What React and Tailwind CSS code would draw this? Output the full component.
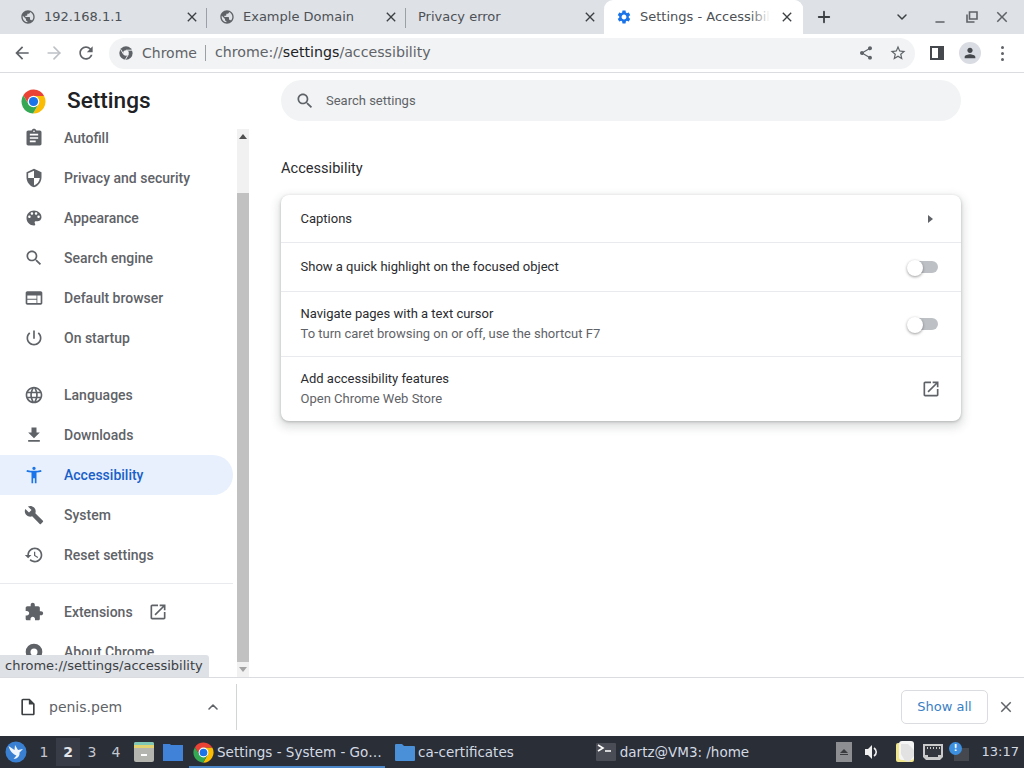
import { ChevronDown, ChevronUp, Plus, Minus, ArrowRight } from "lucide-react";

const paths = {
  back: "M20 11H7.83l5.59-5.59L12 4l-8 8 8 8 1.41-1.41L7.83 13H20v-2z",
  reload: "M17.65 6.35C16.2 4.9 14.21 4 12 4c-4.42 0-7.99 3.58-7.99 8s3.57 8 7.99 8c3.73 0 6.84-2.55 7.73-6h-2.08c-.82 2.33-3.04 4-5.65 4-3.31 0-6-2.69-6-6s2.69-6 6-6c1.66 0 3.14.69 4.22 1.78L13 11h7V4l-2.35 2.35z",
  globe: "M12 2C6.48 2 2 6.48 2 12s4.48 10 10 10 10-4.48 10-10S17.52 2 12 2zm-1 17.93c-3.95-.49-7-3.85-7-7.93 0-.62.08-1.21.21-1.79L9 15v1c0 1.1.9 2 2 2v1.93zm6.9-2.54c-.26-.81-1-1.39-1.9-1.39h-1v-3c0-.55-.45-1-1-1H8v-2h2c.55 0 1-.45 1-1V7h2c1.1 0 2-.9 2-2v-.41c2.93 1.19 5 4.06 5 7.41 0 2.08-.8 3.97-2.1 5.39z",
  close: "M19 6.41L17.59 5 12 10.59 6.41 5 5 6.41 10.59 12 5 17.59 6.41 19 12 13.41 17.59 19 19 17.59 13.41 12z",
  gear: "M19.14 12.94c.04-.3.06-.61.06-.94 0-.32-.02-.64-.07-.94l2.03-1.58c.18-.14.23-.41.12-.61l-1.92-3.32c-.12-.22-.37-.29-.59-.22l-2.39.96c-.5-.38-1.03-.7-1.62-.94l-.36-2.54c-.04-.24-.24-.41-.48-.41h-3.84c-.24 0-.43.17-.47.41l-.36 2.54c-.59.24-1.13.57-1.62.94l-2.39-.96c-.22-.08-.47 0-.59.22L2.74 8.87c-.12.21-.08.47.12.61l2.03 1.58c-.05.3-.09.63-.09.94s.02.64.07.94l-2.03 1.58c-.18.14-.23.41-.12.61l1.92 3.32c.12.22.37.29.59.22l2.39-.96c.5.38 1.03.7 1.62.94l.36 2.54c.05.24.24.41.48.41h3.84c.24 0 .44-.17.47-.41l.36-2.54c.59-.24 1.13-.56 1.62-.94l2.39.96c.22.08.47 0 .59-.22l1.92-3.32c.12-.22.07-.47-.12-.61l-2.01-1.58zM12 15.6c-1.98 0-3.6-1.62-3.6-3.6s1.62-3.6 3.6-3.6 3.6 1.62 3.6 3.6-1.62 3.6-3.6 3.6z",
  search: "M15.5 14h-.79l-.28-.27C15.41 12.59 16 11.11 16 9.5 16 5.91 13.09 3 9.5 3S3 5.91 3 9.5 5.91 16 9.5 16c1.61 0 3.09-.59 4.23-1.57l.27.28v.79l5 4.99L20.49 19l-4.99-5zm-6 0C7.01 14 5 11.99 5 9.5S7.01 5 9.5 5 14 7.01 14 9.5 11.99 14 9.5 14z",
  assignment: "M19 3h-4.18C14.4 1.84 13.3 1 12 1c-1.3 0-2.4.84-2.82 2H5c-1.1 0-2 .9-2 2v14c0 1.1.9 2 2 2h14c1.1 0 2-.9 2-2V5c0-1.1-.9-2-2-2zm-7 0c.55 0 1 .45 1 1s-.45 1-1 1-1-.45-1-1 .45-1 1-1zm2 14H7v-2h7v2zm3-4H7v-2h10v2zm0-4H7V7h10v2z",
  shield: "M12 1L3 5v6c0 5.55 3.84 10.74 9 12 5.16-1.26 9-6.45 9-12V5l-9-4zm0 10.99h7c-.53 4.12-3.28 7.79-7 8.94V12H5V6.3l7-3.11v8.8z",
  palette: "M12 3c-4.97 0-9 4.03-9 9s4.03 9 9 9c.83 0 1.5-.67 1.5-1.5 0-.39-.15-.74-.39-1.01-.23-.26-.38-.61-.38-.99 0-.83.67-1.5 1.5-1.5H16c2.76 0 5-2.24 5-5 0-4.42-4.03-8-9-8zm-5.5 9c-.83 0-1.5-.67-1.5-1.5S5.67 9 6.5 9 8 9.67 8 10.5 7.33 12 6.5 12zm3-4C8.67 8 8 7.33 8 6.5S8.67 5 9.5 5s1.5.67 1.5 1.5S10.33 8 9.5 8zm5 0c-.83 0-1.5-.67-1.5-1.5S13.67 5 14.5 5s1.5.67 1.5 1.5S15.33 8 14.5 8zm3 4c-.83 0-1.5-.67-1.5-1.5S16.67 9 17.5 9s1.5.67 1.5 1.5-.67 1.5-1.5 1.5z",
  web: "M20 4H4c-1.1 0-1.99.9-1.99 2L2 18c0 1.1.9 2 2 2h16c1.1 0 2-.9 2-2V6c0-1.1-.9-2-2-2zm-5 14H4v-4h11v4zm0-5H4V9h11v4zm5 5h-4V9h4v9z",
  power: "M13 3h-2v10h2V3zm4.83 2.17l-1.42 1.42C17.99 7.86 19 9.81 19 12c0 3.87-3.13 7-7 7s-7-3.13-7-7c0-2.19 1.01-4.14 2.58-5.42L6.17 5.17C4.23 6.82 3 9.26 3 12c0 4.97 4.03 9 9 9s9-4.03 9-9c0-2.74-1.23-5.18-3.17-6.83z",
  language: "M11.99 2C6.47 2 2 6.48 2 12s4.47 10 9.99 10C17.52 22 22 17.52 22 12S17.52 2 11.99 2zm6.93 6h-2.95c-.32-1.25-.78-2.45-1.38-3.56 1.84.63 3.37 1.91 4.33 3.56zM12 4.04c.83 1.2 1.48 2.53 1.91 3.96h-3.82c.43-1.43 1.08-2.76 1.91-3.96zM4.26 14C4.1 13.36 4 12.69 4 12s.1-1.36.26-2h3.38c-.08.66-.14 1.32-.14 2 0 .68.06 1.34.14 2H4.26zm.82 2h2.95c.32 1.25.78 2.45 1.38 3.56-1.84-.63-3.37-1.9-4.33-3.56zm2.95-8H5.08c.96-1.66 2.49-2.93 4.33-3.56C8.81 5.55 8.35 6.75 8.03 8zM12 19.96c-.83-1.2-1.48-2.53-1.91-3.96h3.82c-.43 1.43-1.08 2.76-1.91 3.96zM14.34 14H9.66c-.09-.66-.16-1.32-.16-2 0-.68.07-1.35.16-2h4.68c.09.65.16 1.32.16 2 0 .68-.07 1.34-.16 2zm.25 5.56c.6-1.11 1.06-2.31 1.38-3.56h2.95c-.96 1.65-2.49 2.93-4.33 3.56zM16.36 14c.08-.66.14-1.32.14-2 0-.68-.06-1.34-.14-2h3.38c.16.64.26 1.31.26 2s-.1 1.36-.26 2h-3.38z",
  download: "M19 9h-4V3H9v6H5l7 7 7-7zM5 18v2h14v-2H5z",
  accessibility: "M20.5 6c-2.61.7-5.67 1-8.5 1s-5.89-.3-8.5-1L3 8c1.86.5 4 .83 6 1v13h2v-6h2v6h2V9c2-.17 4.14-.5 6-1l-.5-2zM12 6c1.1 0 2-.9 2-2s-.9-2-2-2-2 .9-2 2 .9 2 2 2z",
  wrench: "M22.7 19l-9.1-9.1c.9-2.3.4-5-1.5-6.9-2-2-5-2.4-7.4-1.3L9 6 6 9 1.6 4.7C.4 7.1.9 10.1 2.9 12.1c1.9 1.9 4.6 2.4 6.9 1.5l9.1 9.1c.4.4 1 .4 1.4 0l2.3-2.3c.5-.4.5-1.1.1-1.4z",
  restore: "M13 3c-4.97 0-9 4.03-9 9H1l3.89 3.89.07.14L9 12H6c0-3.87 3.13-7 7-7s7 3.13 7 7-3.13 7-7 7c-1.93 0-3.68-.79-4.94-2.06l-1.42 1.42C8.27 19.99 10.51 21 13 21c4.97 0 9-4.03 9-9s-4.03-9-9-9zm-1 5v5l4.28 2.54.72-1.21-3.5-2.08V8H12z",
  extension: "M20.5 11H19V7c0-1.1-.9-2-2-2h-4V3.5C13 2.12 11.88 1 10.5 1S8 2.12 8 3.5V5H4c-1.1 0-1.99.9-1.99 2v3.8H3.5c1.49 0 2.7 1.21 2.7 2.7s-1.21 2.7-2.7 2.7H2V20c0 1.1.9 2 2 2h3.8v-1.5c0-1.49 1.21-2.7 2.7-2.7 1.49 0 2.7 1.21 2.7 2.7V22H17c1.1 0 2-.9 2-2v-4h1.5c1.38 0 2.5-1.12 2.5-2.5S21.88 11 20.5 11z",
  open: "M19 19H5V5h7V3H5c-1.11 0-2 .9-2 2v14c0 1.1.89 2 2 2h14c1.1 0 2-.9 2-2v-7h-2v7zM14 3v2h3.59l-9.83 9.83 1.41 1.41L19 6.41V10h2V3h-7z",
  star: "M22 9.24l-7.19-.62L12 2 9.19 8.63 2 9.24l5.46 4.73L5.82 21 12 17.27 18.18 21l-1.63-7.03L22 9.24zM12 15.4l-3.76 2.27 1-4.28-3.32-2.88 4.38-.38L12 6.1l1.71 4.04 4.38.38-3.32 2.88 1 4.28L12 15.4z",
  share: "M18 16.08c-.76 0-1.44.3-1.96.77L8.91 12.7c.05-.23.09-.46.09-.7s-.04-.47-.09-.7l7.05-4.11c.54.5 1.25.81 2.04.81 1.66 0 3-1.34 3-3s-1.34-3-3-3-3 1.34-3 3c0 .24.04.47.09.7L8.04 9.81C7.5 9.31 6.79 9 6 9c-1.66 0-3 1.34-3 3s1.34 3 3 3c.79 0 1.5-.31 2.04-.81l7.12 4.16c-.05.21-.08.43-.08.65 0 1.61 1.31 2.92 2.92 2.92 1.61 0 2.92-1.31 2.92-2.92s-1.31-2.92-2.92-2.92z",
  person: "M12 12c2.21 0 4-1.79 4-4s-1.79-4-4-4-4 1.79-4 4 1.79 4 4 4zm0 2c-2.67 0-8 1.34-8 4v2h16v-2c0-2.66-5.33-4-8-4z",
  file: "M14 2H6c-1.1 0-1.99.9-1.99 2L4 20c0 1.1.89 2 1.99 2H18c1.1 0 2-.9 2-2V8l-6-6zm4 18H6V4h7v5h5v11z",
};

function Icon({ d, size = 24, className = "" }) {
  return (
    <svg width={size} height={size} viewBox="0 0 24 24" fill="currentColor" className={`shrink-0 ${className}`}>
      <path d={d} />
    </svg>
  );
}

function ChromeLogo({ size = 24 }) {
  return (
    <svg width={size} height={size} viewBox="0 0 24 24" className="shrink-0">
      <path d="M2.2 5.9A11.6 11.6 0 0 1 22.2 6.6L12 6.6 7.32 14.7z" fill="#ea4335" />
      <path d="M22.2 6.6A11.6 11.6 0 0 1 11.6 23.6L16.68 14.7 12 6.6z" fill="#fbbc04" />
      <path d="M11.6 23.6A11.6 11.6 0 0 1 2.2 5.9L7.32 14.7 16.68 14.7z" fill="#34a853" />
      <circle cx="12" cy="12" r="5.6" fill="#fff" />
      <circle cx="12" cy="12" r="4.4" fill="#1a73e8" />
    </svg>
  );
}

const tabs = [
  { title: "192.168.1.1", icon: true },
  { title: "Example Domain", icon: true },
  { title: "Privacy error", icon: false },
];

const group1 = [
  ["Autofill", paths.assignment],
  ["Privacy and security", paths.shield],
  ["Appearance", paths.palette],
  ["Search engine", paths.search],
  ["Default browser", paths.web],
  ["On startup", paths.power],
];

const group2 = [
  ["Languages", paths.language],
  ["Downloads", paths.download],
  ["Accessibility", paths.accessibility, true],
  ["System", paths.wrench],
  ["Reset settings", paths.restore],
];

function Tab({ title, icon }) {
  return (
    <div className="w-[199px] h-full flex items-center relative pl-3">
      {icon && <Icon d={paths.globe} size={16} className="text-[#5f6368] mr-2" />}
      <span className="text-[13px] text-[#4d5156] whitespace-nowrap">{title}</span>
      <Icon d={paths.close} size={16} className="text-[#3c4043] absolute right-[7px] top-[9px]" />
      <div className="absolute right-0 top-2 w-px h-5 bg-[#9aa0a6]" />
    </div>
  );
}

function TabStrip() {
  return (
    <div className="h-[34px] bg-[#dee1e6] flex items-center pl-2 shrink-0">
      {tabs.map((t) => <Tab key={t.title} {...t} />)}
      <div className="w-[199px] h-full bg-white rounded-t-[9px] flex items-center pl-[12px] relative -ml-[1px]">
        <Icon d={paths.gear} size={16} className="text-[#1a73e8] mr-2" />
        <span className="text-[13px] text-[#4d5156] whitespace-nowrap">Settings - Accessibility</span>
        <div className="absolute left-[146px] top-0 bottom-0 w-[53px] rounded-tr-[9px] bg-[linear-gradient(90deg,rgba(255,255,255,0)_0,#fff_20px)]" />
        <Icon d={paths.close} size={16} className="text-[#3c4043] absolute right-[8px] top-[9px]" />
      </div>
      <Plus size={18} strokeWidth={2.4} className="text-[#3c4043] ml-[12px]" />
      <ChevronDown size={16} strokeWidth={2.2} className="text-[#3c4043] ml-[61px]" />
      <Minus size={14} strokeWidth={2.2} className="text-[#5f6368] ml-[23px] mt-[9px]" />
      <svg width="12" height="12" viewBox="0 0 12 12" className="ml-[19px] text-[#5f6368] shrink-0" fill="none" stroke="currentColor" strokeWidth="1.6">
        <path d="M3.5 1h7.5v7H3.5zM1 3.5V11h7.5" />
      </svg>
      <Icon d={paths.close} size={18} className="text-[#5f6368] ml-[15px]" />
    </div>
  );
}

function Toolbar() {
  return (
    <div className="h-[39px] bg-white border-b border-[#dadce0] flex items-center shrink-0">
      <Icon d={paths.back} size={20} className="text-[#5f6368] ml-[12px]" />
      <ArrowRight size={20} strokeWidth={2} className="text-[#bdc1c6] ml-[12px]" />
      <Icon d={paths.reload} size={20} className="text-[#5f6368] ml-[12px]" />
      <div className="ml-[13px] w-[806px] h-[31px] bg-[#f1f3f4] rounded-full flex items-center pl-[9px] pr-[8px]">
        <svg width="16" height="16" viewBox="0 0 24 24" className="shrink-0 text-[#5f6368]">
          <circle cx="12" cy="12" r="10" fill="currentColor" />
          <circle cx="12" cy="12" r="4.2" fill="#f1f3f4" />
          <path d="M12 7.8h9M8.4 14.1 4 6.5M15.6 14.1 11 22" stroke="#f1f3f4" strokeWidth="1.4" />
        </svg>
        <span className="text-[14px] text-[#5f6368] ml-[8px]">Chrome</span>
        <div className="w-px h-[16px] bg-[#9aa0a6] mx-[8.5px]" />
        <span className="text-[14.2px] text-[#5f6368] whitespace-nowrap">chrome://<span className="text-[#202124]">settings</span>/accessibility</span>
        <Icon d={paths.share} size={16} className="text-[#5f6368] ml-auto" />
        <Icon d={paths.star} size={18} className="text-[#5f6368] ml-[15px]" />
      </div>
      <svg width="14" height="14" viewBox="0 0 14 14" className="ml-[15px] shrink-0">
        <path d="M0 0h14v14H0zM2 2v10h6V2z" fill="#45494e" fillRule="evenodd" />
      </svg>
      <div className="ml-[15px] w-[22px] h-[22px] rounded-full bg-[#dadce3] flex items-center justify-center shrink-0">
        <Icon d={paths.person} size={16} className="text-[#45494e]" />
      </div>
      <div className="ml-[20px] flex flex-col gap-[3px]">
        <div className="w-[3px] h-[3px] rounded-full bg-[#5f6368]" />
        <div className="w-[3px] h-[3px] rounded-full bg-[#5f6368]" />
        <div className="w-[3px] h-[3px] rounded-full bg-[#5f6368]" />
      </div>
    </div>
  );
}

function NavItem({ label, d, active }) {
  return (
    <div className={`h-10 flex items-center pl-[24px] rounded-r-full text-[14px] font-medium ${active ? "bg-[#e8f0fe] text-[#1a5fc8]" : "text-[#5f6368]"}`}>
      <Icon d={d} size={20} className={active ? "text-[#1a73e8]" : "text-[#5f6368]"} />
      <span className="ml-[20px] font-['Roboto',sans-serif] whitespace-nowrap">{label}</span>
    </div>
  );
}

function Sidebar() {
  return (
    <div className="w-[233px] shrink-0 h-full flex flex-col">
      <div className="h-[52px] flex items-center pl-[21px] pt-[4px] shrink-0">
        <ChromeLogo size={25} />
        <span className="ml-[21px] text-[22.6px] font-medium text-[#202124] font-['Roboto',sans-serif] leading-none">Settings</span>
      </div>
      <div className="flex-1 overflow-hidden">
        <div className="-mt-[7px]">
          {group1.map(([l, d]) => <NavItem key={l} label={l} d={d} />)}
          <div className="h-[17px]" />
          {group2.map(([l, d, a]) => <NavItem key={l} label={l} d={d} active={a} />)}
          <div className="border-t border-[#e8eaed] w-[237px] mt-[8px] mb-[8px]" />
          <div className="h-10 flex items-center pl-[24px] text-[14px] font-medium text-[#5f6368] font-['Roboto',sans-serif]">
            <Icon d={paths.extension} size={20} />
            <span className="ml-[20px]">Extensions</span>
            <Icon d={paths.open} size={20} className="ml-[15px]" />
          </div>
          <div className="h-10 flex items-center pl-[24px] text-[14px] font-medium text-[#5f6368] font-['Roboto',sans-serif]">
            <ChromeLogoMono />
            <span className="ml-[20px]">About Chrome</span>
          </div>
        </div>
      </div>
    </div>
  );
}

function ChromeLogoMono() {
  return (
    <svg width="20" height="20" viewBox="0 0 24 24" className="shrink-0 text-[#5f6368]">
      <circle cx="12" cy="12" r="10" fill="currentColor" />
      <circle cx="12" cy="12" r="4.2" fill="#fff" />
    </svg>
  );
}

function Scrollbar() {
  return (
    <div className="w-[12px] shrink-0 flex flex-col h-full pt-[56px] ml-[4px] bg-white">
      <div className="flex-1 flex flex-col bg-[#f1f1f1]">
        <div className="h-[64px] flex justify-center pt-[5px]">
          <div className="w-0 h-0 border-x-[4px] border-x-transparent border-b-[5px] border-b-[#505050]" />
        </div>
        <div className="flex-1 bg-[#c1c1c1]" />
        <div className="h-[15px] flex justify-center pt-[5px]">
          <div className="w-0 h-0 border-x-[4px] border-x-transparent border-t-[5px] border-t-[#a3a3a3]" />
        </div>
      </div>
    </div>
  );
}

function Toggle() {
  return (
    <div className="relative w-[31px] h-[12px] ml-auto mr-[7px]">
      <div className="absolute right-0 top-0 w-[27px] h-[12px] rounded-full bg-[#bdc1c6]" />
      <div className="absolute left-0 -top-[1px] w-[16px] h-[16px] rounded-full bg-white shadow-[0_1px_3px_rgba(0,0,0,0.4)]" />
    </div>
  );
}

function Row({ title, sub, height, children, last }) {
  return (
    <div className={`flex items-center pl-[19.5px] pr-[16px] ${height} ${last ? "" : "border-b border-[#e8eaed]"}`}>
      <div className="flex flex-col font-['Roboto',sans-serif] text-[13px] leading-[20px]">
        <span className="text-[#2b2c30]">{title}</span>
        {sub && <span className="text-[#5f6368]">{sub}</span>}
      </div>
      {children}
    </div>
  );
}

function Main() {
  return (
    <div className="flex-1 h-full pl-[32px] pt-[7px] bg-white">
      <div className="w-[680px] h-[41px] bg-[#f1f3f4] rounded-full flex items-center pl-[14px]">
        <Icon d={paths.search} size={20} className="text-[#5f6368]" />
        <span className="ml-[11px] text-[13px] text-[#5f6368] font-['Roboto',sans-serif]">Search settings</span>
      </div>
      <div className="mt-[37px] text-[14.6px] leading-[20px] text-[#2b2c30] font-['Roboto',sans-serif]">Accessibility</div>
      <div className="mt-[17px] w-[680px] bg-white rounded-[8px] shadow-[0_1px_3px_rgba(60,64,67,0.3),0_4px_8px_3px_rgba(60,64,67,0.15)]">
        <Row title="Captions" height="h-[48px]">
          <div className="ml-auto mr-[12px] w-0 h-0 border-y-[4px] border-y-transparent border-l-[5px] border-l-[#5f6368]" />
        </Row>
        <Row title="Show a quick highlight on the focused object" height="h-[49px]"><Toggle /></Row>
        <Row title="Navigate pages with a text cursor" sub="To turn caret browsing on or off, use the shortcut F7" height="h-[65px]"><Toggle /></Row>
        <Row title="Add accessibility features" sub="Open Chrome Web Store" height="h-[64px]" last>
          <Icon d={paths.open} size={20} className="text-[#5f6368] ml-auto mr-[4px]" />
        </Row>
      </div>
    </div>
  );
}

function DownloadBar() {
  return (
    <div className="h-[59px] bg-white border-t border-[#dadce0] flex items-center shrink-0">
      <div className="w-[237px] h-[46px] border-r border-[#d3d4d6] flex items-center pl-[18px] pr-[15px]">
        <Icon d={paths.file} size={20} className="text-[#3c4043]" />
        <span className="ml-[11px] text-[14px] text-[#5f6368]">penis.pem</span>
        <ChevronUp size={16} strokeWidth={2.4} className="text-[#5f6368] ml-auto" />
      </div>
      <div className="ml-auto w-[87px] h-[34px] border border-[#dadce0] rounded-[5px] flex items-center justify-center text-[13px] text-[#3a7fc4]">Show all</div>
      <Icon d={paths.close} size={18} className="text-[#5f6368] ml-[9px] mr-[9px]" />
    </div>
  );
}

function Taskbar() {
  return (
    <div className="h-[32px] bg-[#2a2e37] flex items-center shrink-0 text-[#d3dae3] text-[13.5px]">
      <svg width="22" height="22" viewBox="0 0 22 22" className="ml-[5px] shrink-0">
        <circle cx="11" cy="11" r="10.5" fill="#3a80d2" />
        <path d="M3.5 5l6 4 .5-5 3 5 5-1-3.5 3.5c.5 3.500-2 6.500-6 6.500l3-3.500C8 13.500 5 10 3.500 5z" fill="#f0f6fd" />
      </svg>
      <div className="ml-[5px] flex items-center text-[14px]">
        <span className="w-6 text-center text-[#c3c7cf]">1</span>
        <span className="w-6 h-[28px] flex items-center justify-center bg-[#383c46] font-bold text-[#e3e6ea]">2</span>
        <span className="w-6 text-center text-[#c3c7cf]">3</span>
        <span className="w-6 text-center text-[#c3c7cf]">4</span>
      </div>
      <div className="ml-[6px] w-[20px] h-[20px] rounded-[2px] bg-[#b5b5b0] flex items-center justify-center relative overflow-hidden shrink-0">
        <div className="absolute top-0 inset-x-0 h-[3px] bg-[#7ec8b5]" />
        <div className="absolute top-[3px] inset-x-0 h-[3px] bg-[#e3d270]" />
        <div className="w-[6px] h-[2px] bg-white mt-[6px]" />
      </div>
      <svg width="20" height="18" viewBox="0 0 20 18" className="ml-[9px] shrink-0">
        <path d="M0 1h7l1 1h12v16H0z" fill="#3f82d8" />
      </svg>
      <div className="ml-[6px] w-[196px] h-full flex items-center pl-[4px] border-b-2 border-[#4a86c8] shrink-0 pt-[2px]">
        <ChromeLogo size={21} />
        <span className="ml-[3px] whitespace-nowrap">Settings - System - Go…</span>
      </div>
      <svg width="20" height="18" viewBox="0 0 20 18" className="ml-[10px] shrink-0">
        <path d="M0 2a1 1 0 0 1 1-1h6l2 2h10a1 1 0 0 1 1 1v13a1 1 0 0 1-1 1H1a1 1 0 0 1-1-1z" fill="#4a90d9" />
      </svg>
      <span className="ml-[3px] whitespace-nowrap">ca-certificates</span>
      <svg width="20" height="18" viewBox="0 0 20 18" className="ml-[82px] shrink-0">
        <rect width="20" height="18" rx="1" fill="#4a4d55" />
        <path d="M2 2l5 3-5 3M9 8h6" stroke="#fff" strokeWidth="1.6" fill="none" />
      </svg>
      <span className="ml-[4px] whitespace-nowrap">dartz@VM3: /home</span>
      <div className="ml-[87px] w-[16px] h-[20px] bg-[#8c8e92] flex flex-col items-center justify-center gap-[1px] shrink-0">
        <div className="w-0 h-0 border-x-[4px] border-x-transparent border-b-[4px] border-b-[#3a3c40]" />
        <div className="w-[8px] h-px bg-[#3a3c40]" />
      </div>
      <svg width="16" height="16" viewBox="0 0 16 16" className="ml-[12px] shrink-0">
        <path d="M1 5h3l4-4v14l-4-4H1z" fill="#f0f0f0" />
        <path d="M10 4c3 2 3 6 0 8" stroke="#f0f0f0" strokeWidth="1.6" fill="none" />
      </svg>
      <svg width="20" height="22" viewBox="0 0 20 22" className="ml-[16px] shrink-0">
        <rect x="0" y="2" width="18" height="19" rx="2" fill="#f0e68c" />
        <rect x="3" y="0" width="15" height="19" rx="3" fill="#f5f5f5" />
        <path d="M5 3h7l6 6v6l-5 6-4-1-4-7z" fill="#e2e2e2" />
      </svg>
      <svg width="20" height="18" viewBox="0 0 20 18" className="ml-[7px] shrink-0">
        <path d="M0 1h20v13l-3 3H3l-3-3z" fill="#c9c9c9" />
        <path d="M2 3h16v9h-3v2H5v-2H2z" fill="#33363d" />
        <path d="M4 4h1v2H4zM7 4h1v2H7zM10 4h1v2h-1zM13 4h1v2h-1zM16 4h1v2h-1z" fill="#c9c9c9" />
      </svg>
      <div className="ml-[6px] relative w-[20px] h-[20px] shrink-0">
        <div className="absolute right-0 bottom-[1px] w-[15px] h-[13px] bg-[#45484f]" />
        <div className="absolute left-0 top-0 w-[13px] h-[13px] rounded-full bg-[#3d8fe0] flex items-center justify-center text-white text-[9px] font-bold leading-none">!</div>
      </div>
      <span className="ml-auto mr-[5px] text-[13px] whitespace-nowrap">13:17</span>
    </div>
  );
}

export default function App() {
  return (
    <div className="w-[1024px] h-[768px] flex flex-col overflow-hidden bg-white font-['DejaVu_Sans',sans-serif]">
      <TabStrip />
      <Toolbar />
      <div className="flex-1 min-h-0 flex relative">
        <Sidebar />
        <Scrollbar />
        <Main />
        <div className="absolute left-0 bottom-0 h-[22px] bg-[#dee1e6] pl-[5px] pr-[6px] flex items-center text-[13px] text-[#3c4043] rounded-tr-[3px]">chrome://settings/accessibility</div>
      </div>
      <DownloadBar />
      <Taskbar />
    </div>
  );
}
